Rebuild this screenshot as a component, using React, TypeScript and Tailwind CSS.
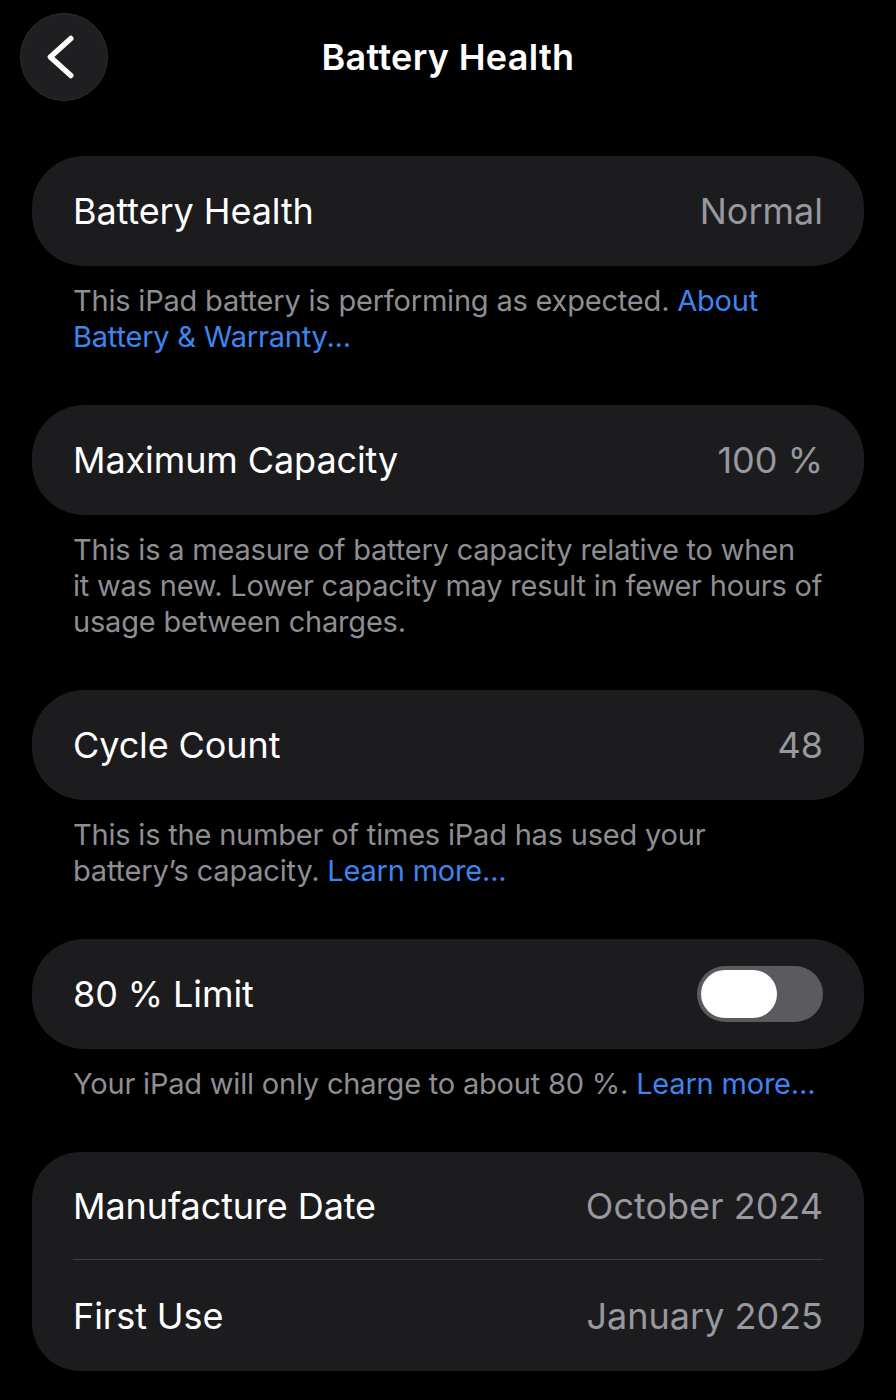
const font = { fontFamily: "Inter, 'Noto Sans', sans-serif" };

function Row({ label, value, children }: { label: string; value?: string; children?: React.ReactNode }) {
  return (
    <div className="flex h-[110px] items-center justify-between rounded-[52px] bg-[#1c1c1e] pl-[41px] pr-[41px]">
      <span className="text-[36px] tracking-[-0.1px] text-white">{label}</span>
      {value && <span className="text-[36px] tracking-[0px] text-[#98989f]">{value}</span>}
      {children}
    </div>
  );
}

function Note({ children }: { children: React.ReactNode }) {
  return (
    <p className="pl-[41px] pr-[36px] pt-[17px] pb-[50px] text-[29px] leading-[36px] tracking-[-0.2px] text-[#8e8e93]">
      {children}
    </p>
  );
}

export default function App() {
  return (
    <div className="min-h-[1400px] w-[896px] bg-black" style={font}>
      <div className="relative flex h-[114px] items-center justify-center">
        <button className="absolute left-5 top-[13px] flex h-[88px] w-[88px] items-center justify-center rounded-full border border-[#2e2e30] bg-[#1f1f21]">
          <svg width="88" height="88" viewBox="0 0 88 88" fill="none">
            <path d="M51 25 L30 44 L51 63" stroke="white" strokeWidth="5.5" strokeLinecap="round" strokeLinejoin="round" />
          </svg>
        </button>
        <h1 className="text-[36px] font-semibold tracking-[0.3px] text-white">Battery Health</h1>
      </div>

      <div className="px-8 pt-[42px]">
        <Row label="Battery Health" value="Normal" />
        <Note>
          This iPad battery is performing as expected. <span className="text-[#3d85f0]">About Battery &amp; Warranty...</span>
        </Note>

        <Row label="Maximum Capacity" value="100 %" />
        <Note>
          This is a measure of battery capacity relative to when
          <br />
          it was new. Lower capacity may result in fewer hours of usage between charges.
        </Note>

        <Row label="Cycle Count" value="48" />
        <Note>
          This is the number of times iPad has used your battery’s capacity. <span className="text-[#3d85f0]">Learn more...</span>
        </Note>

        <Row label="80 % Limit">
          <div className="flex h-[56px] w-[126px] items-center rounded-full bg-[#5b5b5f] p-[4px]">
            <div className="h-[48px] w-[76px] rounded-full bg-white" />
          </div>
        </Row>
        <Note>
          Your iPad will only charge to about 80 %. <span className="text-[#3d85f0]">Learn more...</span>
        </Note>

        <div className="rounded-[48px] bg-[#1c1c1e] px-[41px]">
          <div className="flex h-[108px] items-center justify-between border-b border-[#3a3a3c]">
            <span className="text-[36px] tracking-[-0.1px] text-white">Manufacture Date</span>
            <span className="text-[36px] text-[#98989f]">October 2024</span>
          </div>
          <div className="flex h-[111px] items-center justify-between">
            <span className="text-[36px] tracking-[-0.1px] text-white">First Use</span>
            <span className="text-[36px] text-[#98989f]">January 2025</span>
          </div>
        </div>
      </div>
    </div>
  );
}
